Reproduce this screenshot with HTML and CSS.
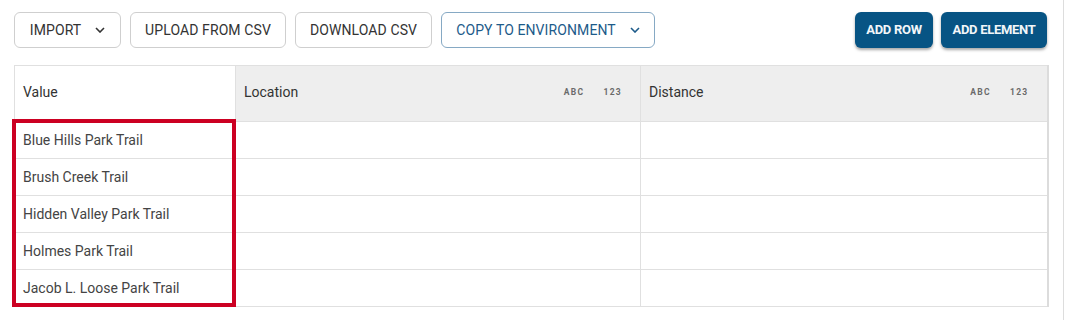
FILE: index.html
```html
<!DOCTYPE html>
<html>
<head>
<meta charset="utf-8">
<link rel="stylesheet" href="styles.css">
</head>
<body>
<div class="page">
  <div class="toolbar">
    <div class="group">
      <button class="btn btn-outline w-import">IMPORT <svg class="chev" viewBox="0 0 10 6"><path d="M1 1l4 4 4-4" fill="none" stroke="currentColor" stroke-width="1.6"/></svg></button>
      <button class="btn btn-outline w-upload">UPLOAD FROM CSV</button>
      <button class="btn btn-outline w-download">DOWNLOAD CSV</button>
      <button class="btn btn-blue-outline w-copy">COPY TO ENVIRONMENT <svg class="chev" viewBox="0 0 10 6"><path d="M1 1l4 4 4-4" fill="none" stroke="currentColor" stroke-width="1.6"/></svg></button>
    </div>
    <div class="group group-right">
      <button class="btn btn-solid w-addrow">ADD ROW</button>
      <button class="btn btn-solid w-addel">ADD ELEMENT</button>
    </div>
  </div>
  <div class="table-wrap">
    <table class="grid">
      <colgroup><col class="c1"><col class="c2"><col class="c3"></colgroup>
      <thead>
        <tr>
          <th class="h-value">Value</th>
          <th class="h-gray"><div class="hcell"><span>Location</span><span class="types"><span>ABC</span><span>123</span></span></div></th>
          <th class="h-gray"><div class="hcell"><span>Distance</span><span class="types"><span>ABC</span><span>123</span></span></div></th>
        </tr>
      </thead>
      <tbody>
        <tr><td>Blue Hills Park Trail</td><td></td><td></td></tr>
        <tr><td>Brush Creek Trail</td><td></td><td></td></tr>
        <tr><td>Hidden Valley Park Trail</td><td></td><td></td></tr>
        <tr><td>Holmes Park Trail</td><td></td><td></td></tr>
        <tr><td>Jacob L. Loose Park Trail</td><td></td><td></td></tr>
      </tbody>
    </table>
    <div class="highlight"></div>
  </div>
</div>
</body>
</html>
```

FILE: styles.css
```css
* { box-sizing: border-box; }
html, body { margin: 0; padding: 0; background: #fff; }
body { font-family: Roboto, "Liberation Sans", sans-serif; color: #333; }

.page {
  width: 1064px;
  height: 320px;
  border-right: 1px solid #dddddd;
  padding: 12px 16px 0 14px;
}

.toolbar {
  display: flex;
  justify-content: space-between;
  height: 36px;
  margin-bottom: 17px;
}
.group { display: flex; gap: 9px; }
.group-right { gap: 8px; }

.btn {
  height: 36px;
  border-radius: 6px;
  font-family: Roboto, "Liberation Sans", sans-serif;
  font-size: 14px;
  display: flex;
  align-items: center;
  justify-content: center;
  padding: 0 0 1px 0;
  cursor: pointer;
  letter-spacing: 0.1px;
}
.btn-outline {
  background: #fff;
  border: 1px solid #cfcfcf;
  color: #333;
}
.btn-blue-outline {
  background: #fff;
  border: 1px solid #86a9c4;
  color: #1d5b8a;
}
.btn-solid {
  background: #075484;
  border: none;
  color: #f2f6f9;
  font-weight: 700;
  font-size: 13px;
  letter-spacing: -0.3px;
  box-shadow: 0 2px 3px rgba(0,0,0,0.35);
}
.chev { width: 10px; height: 6px; margin-left: 14px; }

.w-import { width: 107px; }
.w-upload { width: 156px; }
.w-download { width: 137px; }
.w-copy { width: 214px; }
.w-addrow { width: 78px; }
.w-addel { width: 106px; }

.table-wrap { position: relative; width: 1033px; }

.grid {
  border-collapse: collapse;
  table-layout: fixed;
  width: 1033px;
  border-right: 2px solid #dcdcdc;
}
.c1 { width: 221px; }
.c2 { width: 405px; }
.c3 { width: 407px; }

.grid th, .grid td {
  border: 1px solid #e0e0e0;
  text-align: left;
  padding: 0 8px;
  font-weight: 400;
}
.grid th {
  height: 56px;
  font-size: 14px;
  color: #333;
  padding-bottom: 3px;
}
.grid th.h-gray { background: #eeeeee; }
.grid th.h-value { background: #fff; }
.grid td {
  height: 37px;
  font-size: 14px;
  color: #444;
  padding-bottom: 1px;
}

.hcell { display: flex; justify-content: space-between; align-items: center; }
.types {
  display: flex;
  gap: 19px;
  font-size: 8.5px;
  font-weight: 700;
  letter-spacing: 1.3px;
  color: #6a6a6a;
  margin-right: 10px;
}

.highlight {
  position: absolute;
  left: -2px;
  top: 54px;
  width: 224px;
  height: 188px;
  border: 4px solid #cc0022;
}
```
